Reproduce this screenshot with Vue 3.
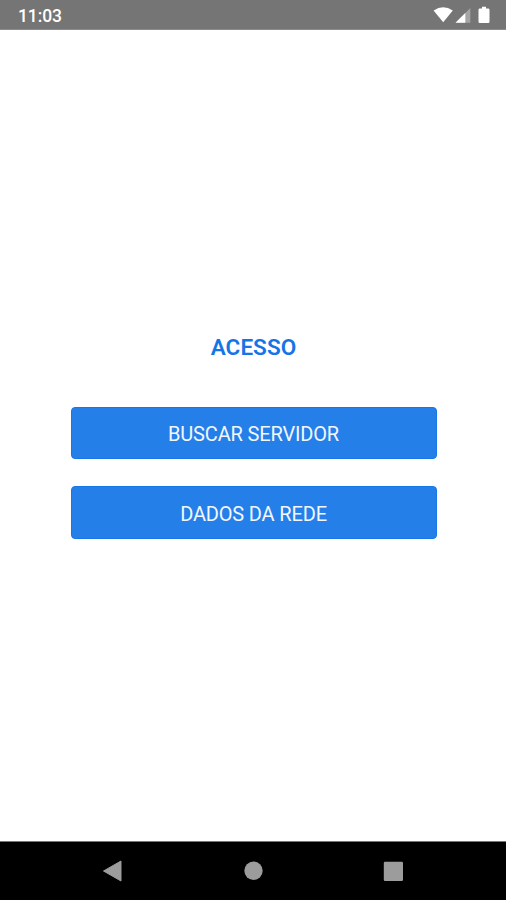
<script setup>
const actions = ['BUSCAR SERVIDOR', 'DADOS DA REDE']
</script>

<template>
  <div class="screen">
    <header class="status">
      <span class="clock">11:03</span>
      <svg class="indicators" width="60" height="20" viewBox="0 0 60 20" aria-hidden="true">
        <path d="M.6 5.6Q10.2-1 19.8 5.6L10.2 17.2Z" fill="#fff" />
        <path d="M22.500 17.8 37.3 3V17.8Z" fill="#fff" fill-opacity=".35" />
        <path d="M22.5 17.8 32.3 8V17.8Z" fill="#fff" />
        <path d="M49 1.8h4v1.8h2.2q1.3 0 1.3 1.3v11.8q0 1.3-1.3 1.3h-8.4q-1.3 0-1.3-1.3V4.9q0-1.3 1.3-1.3H49Z" fill="#fff" />
      </svg>
    </header>
    <main class="content">
      <h1 class="title">ACESSO</h1>
      <button v-for="label in actions" :key="label" class="action" type="button">{{ label }}</button>
    </main>
    <nav class="navbar">
      <svg width="506" height="58" viewBox="0 0 506 58" aria-hidden="true">
        <path d="M103.5 29 121 19v20Z" fill="#9c9c9c" stroke="#9c9c9c" stroke-width="1" stroke-linejoin="round" />
        <circle cx="253.5" cy="28.7" r="9.2" fill="#9c9c9c" />
        <rect x="383.8" y="19.7" width="19.2" height="19.2" rx="1.2" fill="#9c9c9c" />
      </svg>
    </nav>
  </div>
</template>

<style>
body {
  margin: 0;
}
</style>

<style scoped>
.screen {
  display: flex;
  flex-direction: column;
  width: 506px;
  height: 900px;
  background: #fff;
  font-family: Roboto, sans-serif;
}

.status {
  box-sizing: border-box;
  display: flex;
  align-items: center;
  justify-content: space-between;
  height: 30px;
  padding: 2px 13px 0 18px;
  background: #757575;
  border-bottom: 1px solid #8c8c8c;
  color: #fff;
}

.clock {
  font-size: 17.5px;
  font-weight: 500;
  line-height: 20px;
  letter-spacing: -0.1px;
}

.indicators {
  margin-bottom: 2px;
}

.content {
  flex: 1;
  display: flex;
  flex-direction: column;
  align-items: center;
  padding: 304px 0 0 1px;
}

.title {
  margin: 0 0 45.5px;
  color: #1575e8;
  font-size: 22.5px;
  font-weight: 600;
  line-height: 27px;
  letter-spacing: 0.05px;
}

.action {
  box-sizing: border-box;
  width: 366px;
  height: 52.5px;
  margin: 0 0 27px;
  padding: 2px 0 0;
  border: 1px solid #1877e6;
  border-radius: 4px;
  background: #257fe9;
  color: #f2f7fe;
  font: 400 20px/24px Roboto, sans-serif;
  letter-spacing: -0.16px;
}

.action:last-child {
  padding-top: 3px;
}

.navbar {
  box-sizing: border-box;
  height: 59px;
  border-top: 1px solid #777;
  background: #000;
}

.navbar svg {
  display: block;
}
</style>
